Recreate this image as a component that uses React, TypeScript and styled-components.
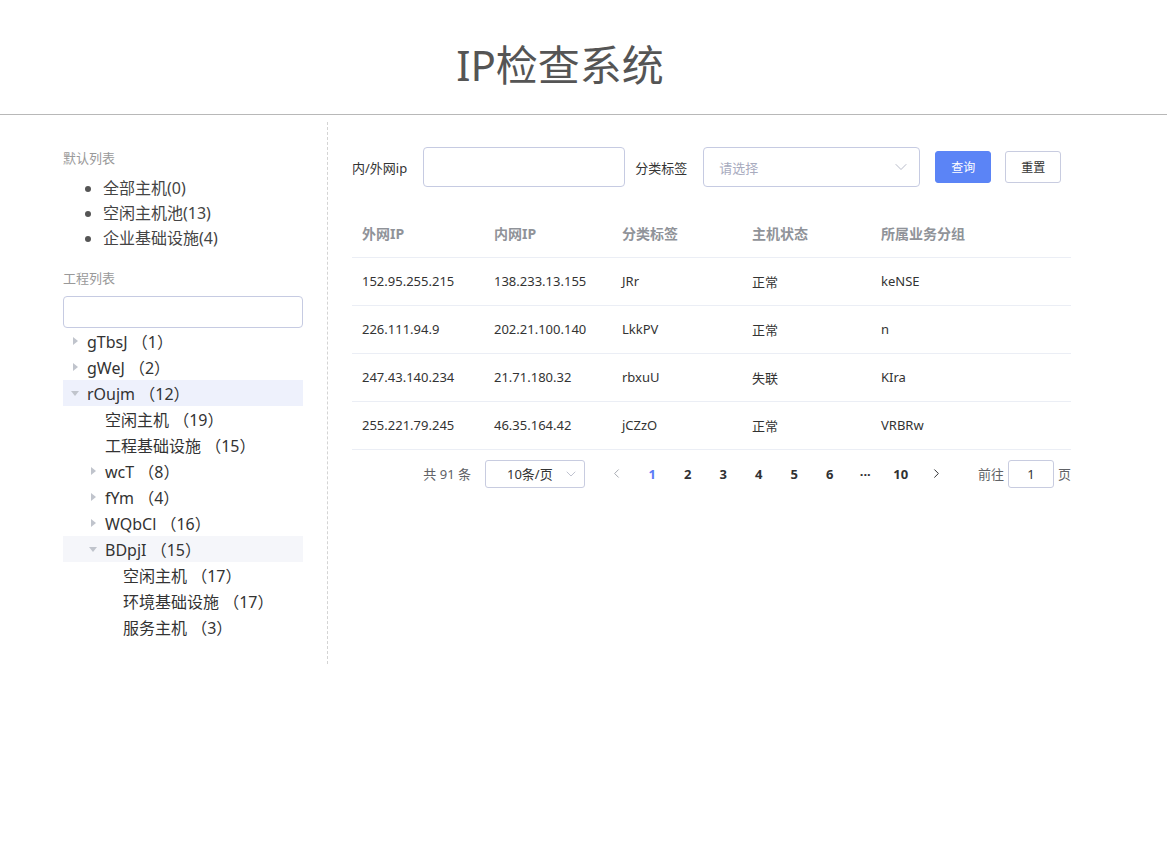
import styled, { createGlobalStyle } from "styled-components";
import { ChevronDown, ChevronLeft, ChevronRight } from "lucide-react";

const GlobalStyle = createGlobalStyle`
  body {
    margin: 0;
    background: #fff;
    font-family: "Noto Sans", "Noto Sans CJK SC", sans-serif;
    color: #333;
  }
`;

const Header = styled.header`
  height: 115px;
  border-bottom: 1px solid #b8b8b8;
  display: flex;
  align-items: center;
  justify-content: center;
  padding: 10px 47px 0 0;
  box-sizing: border-box;
`;

const Title = styled.h1`
  margin: 0;
  font-size: 42px;
  font-weight: 400;
  color: #555;
  letter-spacing: 0;
`;

const Body = styled.div`
  display: flex;
  padding: 7px 0 0 63px;
`;

const Aside = styled.aside`
  width: 240px;
  padding: 27px 24px 24px 0;
  border-right: 1px dashed #d4d4d4;
`;

const SectionTitle = styled.div`
  font-size: 13px;
  line-height: 18px;
  color: #999;
`;

const DefaultList = styled.ul`
  margin: 9px 0 18px;
  padding-left: 40px;
  li {
    font-size: 16px;
    line-height: 25px;
    color: #444;
  }
  li::marker {
    color: #555;
  }
`;

const SearchInput = styled.input`
  display: block;
  width: 100%;
  height: 32px;
  margin-top: 9px;
  box-sizing: border-box;
  border: 1px solid #c6cbe2;
  border-radius: 4px;
  outline: none;
`;

const Node = styled.div<{ level: number; active?: "strong" | "soft" }>`
  display: flex;
  align-items: center;
  height: 26px;
  padding-left: ${(p) => p.level * 18}px;
  font-size: 16px;
  color: #333;
  white-space: pre;
  background: ${(p) =>
    p.active === "strong" ? "#eef1fc" : p.active === "soft" ? "#f5f6fa" : "transparent"};
`;

const Arrow = styled.span<{ open?: boolean; show: boolean }>`
  width: 24px;
  height: 26px;
  flex: none;
  display: flex;
  align-items: center;
  justify-content: center;
  &::before {
    content: "";
    display: ${(p) => (p.show ? "block" : "none")};
    width: 0;
    height: 0;
    border-style: solid;
    ${(p) =>
      p.open
        ? "border-width: 5px 4px 0 4px; border-color: #c0c4cc transparent transparent transparent;"
        : "border-width: 4px 0 4px 5px; border-color: transparent transparent transparent #c0c4cc;"}
  }
`;

const Main = styled.main`
  width: 719px;
  padding: 25px 0 0 24px;
`;

const FilterRow = styled.div`
  display: flex;
  align-items: center;
  height: 40px;
`;

const Label = styled.span<{ gap?: number }>`
  font-size: 13px;
  color: #333;
  margin-left: ${(p) => p.gap || 0}px;
  margin-right: 16px;
`;

const TextField = styled.div<{ w: number }>`
  width: ${(p) => p.w}px;
  height: 40px;
  box-sizing: border-box;
  border: 1px solid #c6cbe2;
  border-radius: 4px;
  display: flex;
  align-items: center;
  justify-content: space-between;
  padding: 0 8px 0 15px;
  font-size: 13px;
  color: #a8abbe;
`;

const Button = styled.button<{ primary?: boolean; gap: number }>`
  width: 56px;
  height: 32px;
  margin-left: ${(p) => p.gap}px;
  border-radius: 3px;
  font-family: inherit;
  font-size: 12px;
  border: 1px solid ${(p) => (p.primary ? "#5b84f6" : "#c8cce0")};
  background: ${(p) => (p.primary ? "#5b84f6" : "#fff")};
  color: ${(p) => (p.primary ? "#fff" : "#333")};
  padding: 0;
`;

const Table = styled.table`
  width: 719px;
  margin-top: 22px;
  border-collapse: collapse;
  table-layout: fixed;
  th,
  td {
    height: 48px;
    padding: 0 0 0 10px;
    text-align: left;
    border-bottom: 1px solid #ebeef5;
    box-sizing: border-box;
  }
  th {
    font-size: 14px;
    font-weight: 700;
    color: #909399;
  }
  td {
    font-size: 13px;
    color: #333;
  }
`;

const Pager = styled.div`
  display: flex;
  align-items: center;
  justify-content: flex-end;
  height: 28px;
  margin-top: 10px;
  font-size: 13px;
  color: #606266;
`;

const SizeSelect = styled.div`
  width: 100px;
  height: 28px;
  margin: 0 14px;
  box-sizing: border-box;
  border: 1px solid #c8cce0;
  border-radius: 3px;
  display: flex;
  align-items: center;
  justify-content: space-between;
  padding: 0 5px 0 21px;
  color: #333;
`;

const PageBtn = styled.span<{ current?: boolean }>`
  width: 35.5px;
  height: 28px;
  display: flex;
  align-items: center;
  justify-content: center;
  font-weight: 700;
  color: ${(p) => (p.current ? "#5b7cf6" : "#303133")};
`;

const JumpLabel = styled.span`
  margin-left: 24px;
`;

const JumpInput = styled.div`
  width: 46px;
  height: 28px;
  margin: 0 4px;
  box-sizing: border-box;
  border: 1px solid #c8cce0;
  border-radius: 3px;
  display: flex;
  align-items: center;
  justify-content: center;
  color: #333;
`;

type TreeItem = { label: string; level: number; arrow: boolean; open?: boolean; active?: "strong" | "soft" };

const tree: TreeItem[] = [
  { label: "gTbsJ （1）", level: 0, arrow: true },
  { label: "gWeJ （2）", level: 0, arrow: true },
  { label: "rOujm （12）", level: 0, arrow: true, open: true, active: "strong" },
  { label: "空闲主机 （19）", level: 1, arrow: false },
  { label: "工程基础设施 （15）", level: 1, arrow: false },
  { label: "wcT （8）", level: 1, arrow: true },
  { label: "fYm （4）", level: 1, arrow: true },
  { label: "WQbCl （16）", level: 1, arrow: true },
  { label: "BDpjI （15）", level: 1, arrow: true, open: true, active: "soft" },
  { label: "空闲主机 （17）", level: 2, arrow: false },
  { label: "环境基础设施 （17）", level: 2, arrow: false },
  { label: "服务主机 （3）", level: 2, arrow: false },
];

const rows = [
  ["152.95.255.215", "138.233.13.155", "JRr", "正常", "keNSE"],
  ["226.111.94.9", "202.21.100.140", "LkkPV", "正常", "n"],
  ["247.43.140.234", "21.71.180.32", "rbxuU", "失联", "KIra"],
  ["255.221.79.245", "46.35.164.42", "jCZzO", "正常", "VRBRw"],
];

const pages = ["1", "2", "3", "4", "5", "6", "···", "10"];

export default function App() {
  return (
    <>
      <GlobalStyle />
      <Header>
        <Title>IP检查系统</Title>
      </Header>
      <Body>
        <Aside>
          <SectionTitle>默认列表</SectionTitle>
          <DefaultList>
            <li>全部主机(0)</li>
            <li>空闲主机池(13)</li>
            <li>企业基础设施(4)</li>
          </DefaultList>
          <SectionTitle>工程列表</SectionTitle>
          <SearchInput />
          {tree.map((n, i) => (
            <Node key={i} level={n.level} active={n.active}>
              <Arrow show={n.arrow} open={n.open} />
              {n.label}
            </Node>
          ))}
        </Aside>
        <Main>
          <FilterRow>
            <Label>内/外网ip</Label>
            <TextField w={202} />
            <Label gap={10}>分类标签</Label>
            <TextField w={217}>
              请选择
              <ChevronDown size={20} strokeWidth={1.1} color="#b0b4c4" />
            </TextField>
            <Button primary gap={15}>查询</Button>
            <Button gap={14}>重置</Button>
          </FilterRow>
          <Table>
            <colgroup>
              <col style={{ width: 132 }} />
              <col style={{ width: 128 }} />
              <col style={{ width: 130 }} />
              <col style={{ width: 129 }} />
              <col />
            </colgroup>
            <thead>
              <tr>
                <th>外网IP</th>
                <th>内网IP</th>
                <th>分类标签</th>
                <th>主机状态</th>
                <th>所属业务分组</th>
              </tr>
            </thead>
            <tbody>
              {rows.map((r, i) => (
                <tr key={i}>
                  {r.map((c, j) => (
                    <td key={j}>{c}</td>
                  ))}
                </tr>
              ))}
            </tbody>
          </Table>
          <Pager>
            <span>共 91 条</span>
            <SizeSelect>
              10条/页
              <ChevronDown size={16} strokeWidth={1.2} color="#b0b4c4" />
            </SizeSelect>
            <PageBtn>
              <ChevronLeft size={15} strokeWidth={1.6} color="#a8abb2" />
            </PageBtn>
            {pages.map((p) => (
              <PageBtn key={p} current={p === "1"}>
                {p}
              </PageBtn>
            ))}
            <PageBtn>
              <ChevronRight size={15} strokeWidth={1.6} color="#303133" />
            </PageBtn>
            <JumpLabel>前往</JumpLabel>
            <JumpInput>1</JumpInput>
            <span>页</span>
          </Pager>
        </Main>
      </Body>
    </>
  );
}
